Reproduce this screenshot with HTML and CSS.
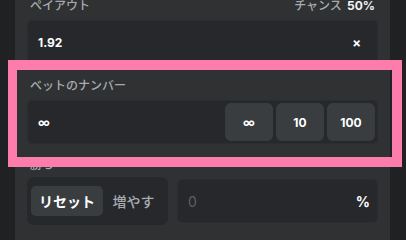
FILE: index.html
```html
<!DOCTYPE html>
<html lang="ja">
<head>
<meta charset="utf-8">
<link rel="stylesheet" href="styles.css">
</head>
<body>
<div class="panel">
  <div class="stack">
    <div class="field">
      <div class="label-row">
        <span class="label">ペイアウト</span>
        <span class="label">チャンス <b class="strong">50%</b></span>
      </div>
      <div class="input payout">
        <span class="value">1.92</span>
        <span class="suffix">×</span>
      </div>
    </div>
    <div class="field">
      <div class="label-row">
        <span class="label">ベットのナンバー</span>
      </div>
      <div class="input bet">
        <span class="value">∞</span>
        <div class="btns">
          <span class="btn">∞</span>
          <span class="btn">10</span>
          <span class="btn">100</span>
        </div>
      </div>
    </div>
    <div class="field">
      <div class="label-row">
        <span class="label">勝ち</span>
      </div>
      <div class="win-row">
        <div class="toggle">
          <span class="tab active">リセット</span>
          <span class="tab">増やす</span>
        </div>
        <div class="input pct">
          <span class="placeholder">0</span>
          <span class="pct-suffix">%</span>
        </div>
      </div>
    </div>
  </div>
</div>
<div class="highlight"></div>
</body>
</html>
```
FILE: styles.css
```css
html, body {
  margin: 0;
  padding: 0;
}
html {
  background: #1f2123;
  overflow: hidden;
}
body {
  min-height: 100vh;
  background: #1f2123;
  font-family: "Inter", "Noto Sans CJK JP", sans-serif;
  position: relative;
}
.panel {
  margin-left: 15px;
  width: 375px;
  min-height: 100vh;
  box-sizing: border-box;
  background: #2f3133;
  padding: 0 12px 20px;
  overflow: hidden;
}
.stack {
  margin-top: -2px;
  display: flex;
  flex-direction: column;
  gap: 13px;
}
.label-row {
  display: flex;
  justify-content: space-between;
  align-items: center;
  height: 16px;
  line-height: 16px;
  padding: 0 3px;
  margin-bottom: 6px;
}
.label {
  font-size: 12px;
  font-weight: 500;
  color: #a7abb0;
  white-space: nowrap;
}
.strong {
  font-weight: 700;
  color: #f2f3f5;
  margin-left: 2px;
}
.input {
  background: #26282b;
  border-radius: 6px;
  box-shadow: inset 0 0 0 1px #2b2d30;
  display: flex;
  align-items: center;
  box-sizing: border-box;
}
.payout {
  height: 45px;
  justify-content: space-between;
  padding: 0 17px 0 11px;
}
.value {
  font-size: 12px;
  font-weight: 700;
  color: #ffffff;
}
.suffix {
  font-size: 13px;
  font-weight: 700;
  color: #ffffff;
}
.bet {
  height: 44px;
  padding: 3px;
  justify-content: space-between;
}
.bet .value {
  padding-left: 8px;
}
.btns {
  display: flex;
  gap: 3px;
}
.btn {
  width: 48px;
  height: 38px;
  border-radius: 6px;
  background: #3a3d40;
  display: flex;
  align-items: center;
  justify-content: center;
  font-size: 12px;
  font-weight: 700;
  color: #ffffff;
}
.win-row {
  display: flex;
  align-items: flex-start;
  gap: 9px;
}
.toggle {
  width: 141px;
  height: 48px;
  margin-top: -2px;
  box-sizing: border-box;
  padding: 9px 4px;
  background: #26282b;
  border-radius: 7px;
  display: flex;
}
.tab {
  flex: 1;
  display: flex;
  align-items: center;
  justify-content: center;
  font-size: 14px;
  font-weight: 500;
  color: #a7abb0;
  border-radius: 5px;
}
.tab.active {
  flex: 0 0 72px;
  background: #3a3d40;
  color: #ffffff;
  font-weight: 700;
}
.pct {
  flex: 1;
  height: 44px;
  padding: 0 8px 0 11px;
  justify-content: space-between;
}
.placeholder {
  font-size: 14px;
  color: #5c6065;
}
.pct-suffix {
  font-size: 14px;
  font-weight: 700;
  color: #ffffff;
}
.highlight {
  position: absolute;
  left: 8px;
  top: 60px;
  width: 394px;
  height: 107px;
  box-sizing: border-box;
  border: 10px solid #fc7cab;
  border-left-width: 9px;
  pointer-events: none;
}
```
